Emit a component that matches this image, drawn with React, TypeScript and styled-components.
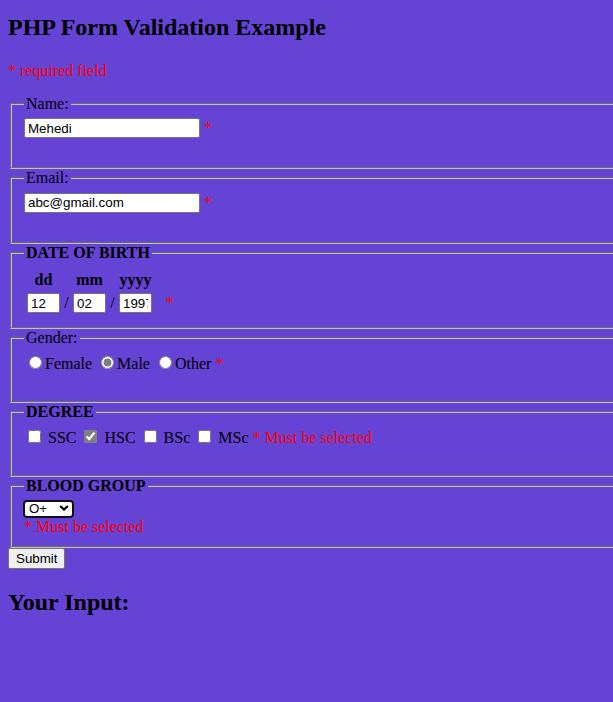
import React from 'react';
import styled, { createGlobalStyle } from 'styled-components';

const GlobalStyle = createGlobalStyle`
  html, body {
    margin: 0;
    padding: 0;
    background: #6543d4;
    overflow: hidden;
  }
  body {
    font-family: "Liberation Serif", "Times New Roman", serif;
    font-size: 16px;
    line-height: normal;
    color: #000;
  }
`;

const Page = styled.main`
  padding: 8px;
`;

const Title = styled.h2<{ $mt: number; $mb: number }>`
  margin: ${(p) => p.$mt}px 0 ${(p) => p.$mb}px;
  font-size: 24px;
  font-weight: 700;
  line-height: normal;
`;

const Required = styled.p`
  margin: 0 0 14.8px;
  color: #ff0000;
`;

const Form = styled.form`
  margin: 0;
`;

const Fieldset = styled.fieldset<{ $pt: number; $pb: number }>`
  margin: 0 2px;
  padding: ${(p) => p.$pt}px 12px ${(p) => p.$pb}px;
  border: 2px groove #c0c0c0;
  width: 820px;
  min-width: 0;
  box-sizing: border-box;
`;

const Legend = styled.legend<{ $bold?: boolean }>`
  padding: 0 2px;
  font-weight: ${(p) => (p.$bold ? 700 : 400)};
  line-height: normal;
`;

const Line = styled.div`
  line-height: normal;
  white-space: nowrap;
`;

const TextInput = styled.input<{ $w: number }>`
  box-sizing: border-box;
  width: ${(p) => p.$w}px;
  height: 20px;
  padding: 1px 3px;
  margin: 0;
  border: 1px solid #767676;
  border-radius: 2px;
  background: #fff;
  color: #000;
  font: 13.333px "Liberation Sans", Arial, sans-serif;
  vertical-align: baseline;
  outline: none;
`;

const Star = styled.span`
  color: #ff0000;
`;

const DobRow = styled.div<{ $gap?: number }>`
  display: grid;
  grid-template-columns: 33px 13px 33px 13px 33px auto;
  align-items: baseline;
  margin-left: 3px;
  margin-top: ${(p) => p.$gap ?? 0}px;
  line-height: normal;
`;

const Head = styled.span<{ $col: number }>`
  grid-column: ${(p) => p.$col};
  font-weight: 700;
  text-align: center;
`;

const Slash = styled.span`
  text-align: center;
`;

const DobStar = styled(Star)`
  margin-left: 13.5px;
`;

const Radio = styled.input.attrs({ type: 'radio' })`
  width: 13px;
  height: 13px;
  margin: 3px 3px 0 5px;
  accent-color: #808080;
  vertical-align: baseline;
`;

const Checkbox = styled.input.attrs({ type: 'checkbox' })`
  width: 13px;
  height: 13px;
  margin: 3px 3px 3px 4px;
  accent-color: #808080;
  vertical-align: baseline;
`;

const Err = styled.span`
  color: #ff0000;
`;

const SelectWrap = styled.div`
  position: relative;
  width: 51px;
  height: 18px;
  margin-left: -1px;
`;

const Select = styled.select`
  appearance: none;
  -webkit-appearance: none;
  display: block;
  box-sizing: border-box;
  width: 51px;
  height: 18px;
  margin: 0;
  padding: 0 0 0 4px;
  border: 2px solid #101010;
  border-radius: 4px;
  box-shadow: inset 0 0 0 1px #fff;
  background: #fff;
  color: #000;
  font: 13.333px "Liberation Sans", Arial, sans-serif;
  line-height: 14px;
  outline: none;
`;

const Chevron = styled.svg`
  position: absolute;
  right: 5px;
  top: 5px;
  width: 10px;
  height: 6px;
  pointer-events: none;
`;

const Submit = styled.button`
  display: block;
  box-sizing: border-box;
  height: 21px;
  margin: 0;
  padding: 1px 7px;
  border: 1px solid #767676;
  border-radius: 2px;
  background: #efefef;
  color: #000;
  font: 13.333px "Liberation Sans", Arial, sans-serif;
`;

export default function App() {
  return (
    <>
      <GlobalStyle />
      <Page>
        <Title $mt={6} $mb={21}>PHP Form Validation Example</Title>
        <Required>* required field</Required>
        <Form onSubmit={(e) => e.preventDefault()}>
          <Fieldset $pt={5.3} $pb={28.5}>
            <Legend>Name:</Legend>
            <Line>
              <TextInput $w={176} type="text" defaultValue="Mehedi" /> <Star>*</Star>
            </Line>
          </Fieldset>
          <Fieldset $pt={6.3} $pb={29.3}>
            <Legend>Email:</Legend>
            <Line>
              <TextInput $w={176} type="text" defaultValue="abc@gmail.com" /> <Star>*</Star>
            </Line>
          </Fieldset>
          <Fieldset $pt={9.2} $pb={13.8}>
            <Legend $bold>DATE OF BIRTH</Legend>
            <DobRow>
              <Head $col={1}>dd</Head>
              <Head $col={3}>mm</Head>
              <Head $col={5}>yyyy</Head>
            </DobRow>
            <DobRow $gap={4}>
              <TextInput $w={33} type="text" defaultValue="12" />
              <Slash>/</Slash>
              <TextInput $w={33} type="text" defaultValue="02" />
              <Slash>/</Slash>
              <TextInput $w={33} type="text" defaultValue="1997" />
              <DobStar>*</DobStar>
            </DobRow>
          </Fieldset>
          <Fieldset $pt={5.8} $pb={28}>
            <Legend>Gender:</Legend>
            <Line>
              <Radio name="gender" />Female{' '}
              <Radio name="gender" defaultChecked />Male{' '}
              <Radio name="gender" />Other <Star>*</Star>
            </Line>
          </Fieldset>
          <Fieldset $pt={6.5} $pb={27.3}>
            <Legend $bold>DEGREE</Legend>
            <Line>
              <Checkbox /> SSC <Checkbox defaultChecked /> HSC <Checkbox /> BSc{' '}
              <Checkbox /> MSc <Err>* Must be selected</Err>
            </Line>
          </Fieldset>
          <Fieldset $pt={4.8} $pb={10.4}>
            <Legend $bold>BLOOD GROUP</Legend>
            <SelectWrap>
              <Select defaultValue="O+">
                <option>A+</option>
                <option>A-</option>
                <option>B+</option>
                <option>B-</option>
                <option>AB+</option>
                <option>AB-</option>
                <option>O+</option>
                <option>O-</option>
              </Select>
              <Chevron viewBox="0 0 10 6" aria-hidden="true">
                <polyline points="1.2,1 5,4.6 8.8,1" fill="none" stroke="#000" strokeWidth="2.2" />
              </Chevron>
            </SelectWrap>
            <Line>
              <Err>* Must be selected</Err>
            </Line>
          </Fieldset>
          <Submit type="submit">Submit</Submit>
        </Form>
        <Title $mt={19.92} $mb={19.92}>Your Input:</Title>
      </Page>
    </>
  );
}
